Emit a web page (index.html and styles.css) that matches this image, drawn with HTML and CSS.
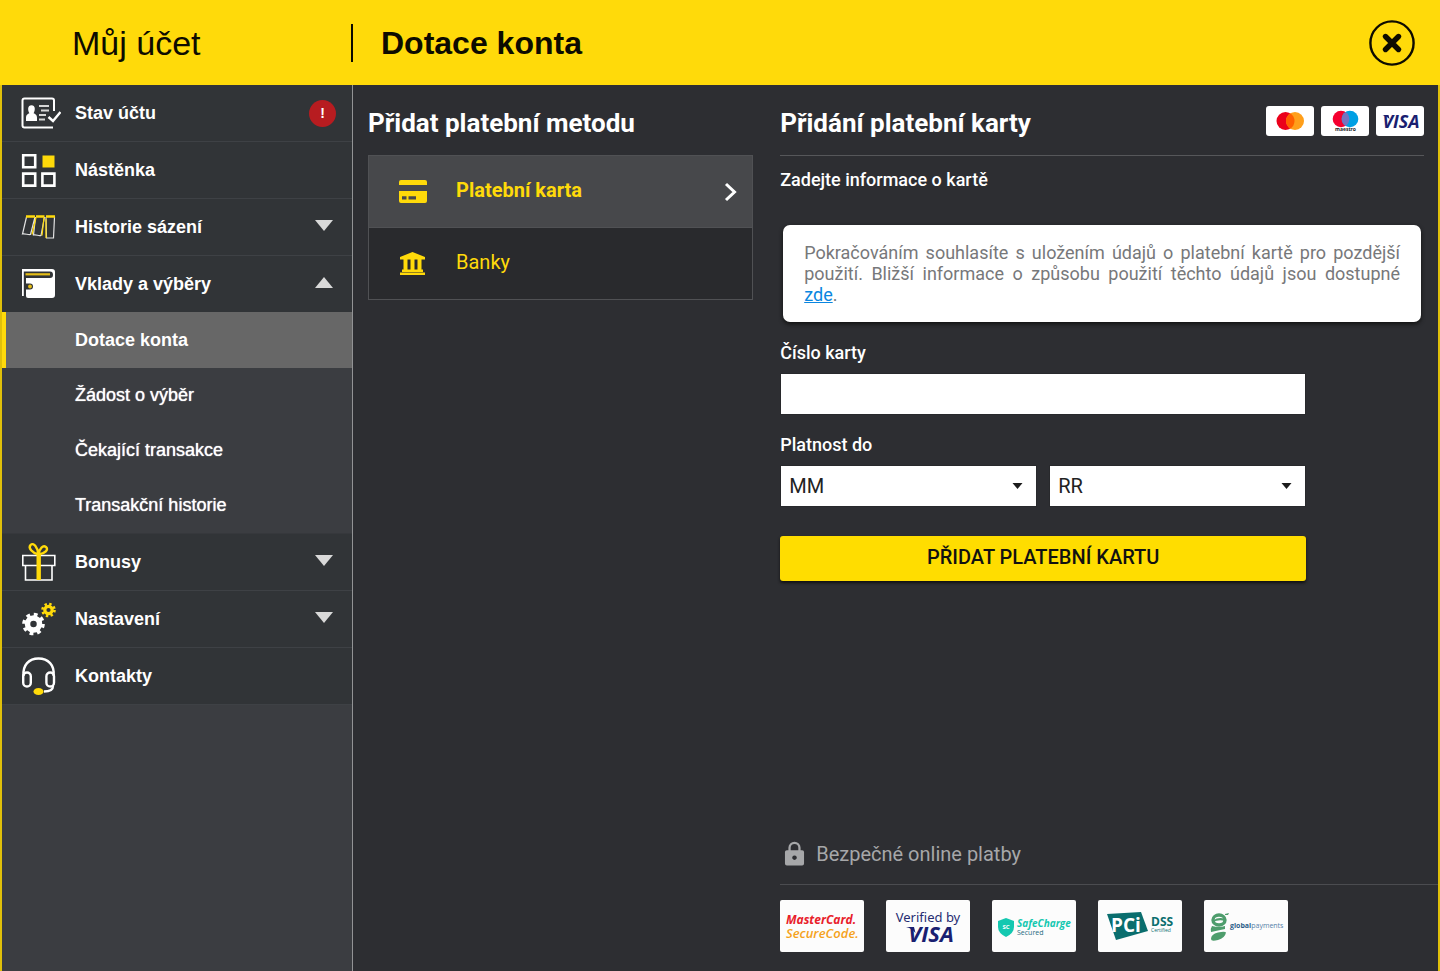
FILE: index.html
```html
<!DOCTYPE html>
<html lang="cs">
<head>
<meta charset="utf-8">
<title>Můj účet – Dotace konta</title>
<meta name="viewport" content="width=device-width, initial-scale=1">
<link rel="stylesheet" href="styles.css">
</head>
<body>
<div class="page">
  <header class="topbar">
    <div class="topbar-account">Můj účet</div>
    <h1 class="topbar-title">Dotace konta</h1>
    <button class="close" type="button" aria-label="Zavřít">
      <svg width="46" height="46" viewBox="0 0 46 46" fill="none" stroke="#0d0b00"><circle cx="23" cy="23" r="21.6" stroke-width="2.4"/><path d="M16.5 16.5l13 13M29.5 16.5l-13 13" stroke-width="5.4" stroke-linecap="round"/></svg>
    </button>
  </header>

  <div class="body">
    <nav class="sidebar" aria-label="Můj účet">
      <a class="item" href="#">
        <svg class="icon" viewBox="0 0 40 40" fill="none"><path d="M33 18V7.500a2 2 0 0 0-2-2H3.500a2 2 0 0 0-2 2v25a2 2 0 0 0 2 2H32" stroke="#fff" stroke-width="2"/><path d="M5 28v-3.500c0-2.500 1.700-3.500 3.400-4.200C6.500 17 6.500 12.500 10.500 12.300c4 .200 4 4.700 2.100 8 1.700.700 3.400 1.700 3.400 4.200V28z" fill="#fff"/><path d="M18 13h10M20 17.500h8M18 22h7M18 26.500h6" stroke="#d6d6d6" stroke-width="1.800"/><path d="M27.500 24l4.500 4 7.500-9" stroke="#fff" stroke-width="2.400"/></svg>
        <span class="item-text">Stav účtu</span><span class="alert">!</span>
      </a>
      <a class="item" href="#">
        <svg class="icon" viewBox="0 0 40 40" fill="none" stroke="#fff" stroke-width="2.600"><path d="M2.200 5.200h12v12h-12zM2.200 23.600h12v12h-12zM21.400 23.600h12v12h-12z"/><path d="M21.500 5.500h12v12h-12z" fill="#ffda0a" stroke="none"/></svg>
        <span class="item-text">Nástěnka</span>
      </a>
      <a class="item" href="#">
        <svg class="icon" viewBox="0 0 40 40" fill="none" stroke="#e2e2e2" stroke-width="1.200"><path d="M5.500 10l-4 17c3-.500 5.500 1 8 .500L14 10M14.500 10l-2 18c3-1 5 1.500 7.500.500L23.500 10M25 10l.500 21h7L33.500 10"/><path d="M11 27.500l4-17M21 28.500l2-18M25 12v19" stroke="#ffda0a"/><path d="M5 9.500h9M15 9.500h8.500M25 9.500h9" stroke="#ffda0a" stroke-width="2.400"/></svg>
        <span class="item-text">Historie sázení</span>
        <svg class="caret" viewBox="0 0 18 11"><path d="M0 0h18L9 11z" fill="#d9d9d9"/></svg>
      </a>
      <a class="item item-open" href="#">
        <svg class="icon" viewBox="0 0 40 40"><path d="M1 5h30q3 0 3 3v23q0 3-3 3H7q-2 0-2-2H1z" fill="#fff"/><path d="M2.800 7.500v25H5V14h24q3 0 3-3.200T29 7.500z" fill="#303336"/><path d="M4.500 10.300H29" stroke="#e5bd16" stroke-width="2.200"/><path d="M5 19.500h4q3 0 3 3t-3 3H5z" fill="#303336"/><circle cx="9" cy="22.500" r="1.900" fill="#e5bd16"/></svg>
        <span class="item-text">Vklady a výběry</span>
        <svg class="caret" viewBox="0 0 18 11"><path d="M0 11h18L9 0z" fill="#d9d9d9"/></svg>
      </a>
      <div class="submenu">
        <a class="sub sub-active" href="#" aria-current="page">Dotace konta</a>
        <a class="sub" href="#">Žádost o výběr</a>
        <a class="sub" href="#">Čekající transakce</a>
        <a class="sub" href="#">Transakční historie</a>
      </div>
      <a class="item" href="#">
        <svg class="icon" viewBox="0 0 40 40" fill="none"><path d="M1.800 13.500h32v10h-32zM4.500 23.500V38H31V23.500" stroke="#fff" stroke-width="1.600"/><path d="M17.700 13v25" stroke="#ffda0a" stroke-width="4.400"/><path d="M17.500 12.500C11 11 7 6 9.500 3c3-3 7 2 8 9.500 1-6.500 4.500-9.500 7.500-7.500 3 2.500-1 6.500-7.500 7.500z" stroke="#ffda0a" stroke-width="2.400"/></svg>
        <span class="item-text">Bonusy</span>
        <svg class="caret" viewBox="0 0 18 11"><path d="M0 0h18L9 11z" fill="#d9d9d9"/></svg>
      </a>
      <a class="item" href="#">
        <svg class="icon" viewBox="0 0 40 40" fill="none"><circle cx="12.500" cy="25" r="6" stroke="#fff" stroke-width="5.500"/><circle cx="12.500" cy="25" r="9.600" stroke="#fff" stroke-width="3.400" stroke-dasharray="3.770 3.770"/><circle cx="27.500" cy="11" r="3.700" stroke="#ffda0a" stroke-width="3.200"/><circle cx="27.500" cy="11" r="6" stroke="#ffda0a" stroke-width="2.600" stroke-dasharray="2.356 2.356"/></svg>
        <span class="item-text">Nastavení</span>
        <svg class="caret" viewBox="0 0 18 11"><path d="M0 0h18L9 11z" fill="#d9d9d9"/></svg>
      </a>
      <a class="item" href="#">
        <svg class="icon" viewBox="0 0 40 40" fill="none" stroke="#fff" stroke-width="2.400"><path d="M2.500 20C1.500 9 8 2.500 17.500 2.500S34 9 32.500 20M32 30c0 4-4 5.500-9 5.500"/><rect x="2.200" y="16.500" width="7.600" height="14" rx="3.800"/><rect x="25.400" y="16.500" width="7.600" height="14" rx="3.800"/><ellipse cx="17.500" cy="35.500" rx="5" ry="3.600" fill="#ffda0a" stroke="none"/></svg>
        <span class="item-text">Kontakty</span>
      </a>
    </nav>

    <main class="main">
      <section class="methods">
        <div class="head"><h2 class="title">Přidat platební metodu</h2></div>
        <div class="method-list">
          <button class="method method-active" type="button">
            <svg class="method-icon" viewBox="0 0 30 26"><path d="M3 1h24q2 0 2 2v3H1V3q0-2 2-2zM1 12h28v10q0 2-2 2H3q-2 0-2-2zM4 17.200v3.300h4.500v-3.300zm6.500 0v3.300H18v-3.300z" fill="#ffda0a" fill-rule="evenodd"/></svg>
            <span class="method-text">Platební karta</span>
            <svg class="chevron" viewBox="0 0 14 20"><path d="M2 2l8.500 8L2 18" fill="none" stroke="#fff" stroke-width="3"/></svg>
          </button>
          <button class="method" type="button">
            <svg class="method-icon" viewBox="0 0 30 26"><path d="M14.500 1L27 6v2.500H2V6zM5.500 8.500h4V19h-4zM12.500 8.500h4V19h-4zM19.500 8.500h4V19h-4zM4 18.500h21V21H4zM2 21.500h25V24H2z" fill="#ffda0a"/></svg>
            <span class="method-text">Banky</span>
          </button>
        </div>
      </section>

      <section class="card">
        <form class="card-form">
          <div class="head head-lined">
            <h2 class="title">Přidání platební karty</h2>
            <div class="brands">
              <svg class="brand" viewBox="0 0 48 30" role="img" aria-label="Mastercard"><circle cx="19.500" cy="15" r="9" fill="#eb001b"/><circle cx="29" cy="15" r="9" fill="#ff9f1a"/><path d="M24.250 7.350a9 9 0 0 1 0 15.300a9 9 0 0 1 0-15.300z" fill="#ff5f00"/></svg>
              <svg class="brand" viewBox="0 0 48 30" role="img" aria-label="Maestro"><circle cx="20" cy="13" r="8.300" fill="#f5002f"/><circle cx="29" cy="13" r="8.300" fill="#00a0e4"/><path d="M24.500 6a8.300 8.300 0 0 1 0 14a8.300 8.300 0 0 1 0-14z" fill="#7673c0"/><text x="24.500" y="25" class="maestro-text">maestro</text></svg>
              <svg class="brand" viewBox="0 0 48 30" role="img" aria-label="Visa"><text x="25" y="21.500" class="visa-text">VISA</text><path d="M6.500 9h6l1 4q-3-3-7-4z" fill="#1a1f71"/></svg>
            </div>
          </div>
          <p class="lead">Zadejte informace o kartě</p>
          <p class="notice">Pokračováním souhlasíte s uložením údajů o platební kartě pro pozdější použití. Bližší informace o způsobu použití těchto údajů jsou dostupné <a class="notice-link" href="#">zde</a>.</p>
          <div class="fields">
            <label class="label" for="number">Číslo karty</label>
            <input class="control" id="number" type="text" inputmode="numeric">
            <label class="label" for="month">Platnost do</label>
            <div class="expiry">
              <div class="select-wrap">
                <select class="control" id="month"><option>MM</option></select>
                <svg class="select-arrow" viewBox="0 0 10 6"><path d="M0 0h10L5 6z" fill="#1c1c1c"/></svg>
              </div>
              <div class="select-wrap">
                <select class="control" id="year" aria-label="Rok platnosti"><option>RR</option></select>
                <svg class="select-arrow" viewBox="0 0 10 6"><path d="M0 0h10L5 6z" fill="#1c1c1c"/></svg>
              </div>
            </div>
            <button class="submit" type="submit">PŘIDAT PLATEBNÍ KARTU</button>
          </div>
        </form>

        <footer class="secure">
          <div class="secure-head">
            <svg class="lock" viewBox="0 0 22 26"><path d="M5.800 10V6.500a5 5 0 0 1 10.400 0V10" fill="none" stroke="#a6a7a9" stroke-width="2.400"/><path d="M3 9h16q2 0 2 2v12q0 2-2 2H3q-2 0-2-2V11q0-2 2-2zm8 5.500a2.400 2.400 0 1 0 .01 0z" fill="#a6a7a9"/></svg>
            <span class="secure-text">Bezpečné online platby</span>
          </div>
          <div class="badges">
            <svg class="badge" viewBox="0 0 84 52" role="img" aria-label="MasterCard SecureCode"><text x="6" y="24" class="mc-red">MasterCard.</text><text x="6" y="38" class="mc-orange">SecureCode.</text></svg>
            <svg class="badge" viewBox="0 0 84 52" role="img" aria-label="Verified by Visa"><text x="42" y="22" class="verified-text">Verified by</text><text x="45" y="42" class="visa-large">VISA</text><path d="M20 27h8l1.500 6q-4-5-9.500-6z" fill="#1a1f71"/></svg>
            <svg class="badge" viewBox="0 0 84 52" role="img" aria-label="SafeCharge Secured"><path d="M14 18l8 3v6q0 6-8 10q-8-4-8-10v-6z" fill="#14c8b0"/><text x="14" y="29" class="sc-mark">SC</text><text x="25" y="27" class="sc-name">SafeCharge</text><text x="25" y="35" class="sc-sub">Secured</text></svg>
            <svg class="badge" viewBox="0 0 84 52" role="img" aria-label="PCI DSS Certified"><path d="M9 14l34-2 7 19-32 9z" fill="#0a6e6e"/><text x="13" y="32" class="pci-text">PCi</text><text x="53" y="26" class="dss-text">DSS</text><text x="53" y="32" class="dss-sub">Certified</text></svg>
            <svg class="badge" viewBox="0 0 84 52" role="img" aria-label="Global Payments"><ellipse cx="15" cy="20" rx="6" ry="5" fill="none" stroke="#4e9d6c" stroke-width="3.400"/><path d="M9 20.500q6-4 12-1.500v2q-6-2-12 1zM8 26q7 2 13 0v3l-14 3q-1-3 1-6zM7 39q0-5 7-6.500t8 0q-1 5.500-8 7.500t-7-1zM21 14l4-1-1 2h-3z" fill="#4e9d6c"/><text x="26" y="28" class="gp-text"><tspan class="gp-bold">global</tspan>payments</text></svg>
          </div>
        </footer>
      </section>
    </main>
  </div>
</div>
</body>
</html>
```

FILE: styles.css
```css
* { box-sizing: border-box; }

body {
  margin: 0;
  background: #2d2e32;
  color: #fff;
  font-family: Roboto, "Liberation Sans", sans-serif;
}

button { font: inherit; cursor: pointer; }

.page {
  display: flex;
  flex-direction: column;
  min-height: 100vh;
}

/* Top bar */
.topbar {
  display: flex;
  align-items: center;
  height: 85px;
  padding-right: 25px;
  background: #ffda0a;
  color: #0d0b00;
  font-family: "Liberation Sans", Arial, sans-serif;
}

.topbar-account {
  flex: 0 0 353px;
  padding-left: 72px;
  border-right: 2px solid #0d0b00;
  font-size: 34px;
  line-height: 38px;
}

.topbar-title {
  flex: 1;
  margin: 0;
  padding-left: 28px;
  font-size: 32px;
  line-height: 38px;
}

.close {
  display: flex;
  padding: 0;
  border: 0;
  background: none;
}

.body {
  display: flex;
  flex: 1;
  border: solid #e0c00a;
  border-width: 0 2px;
}

/* Sidebar */
.sidebar {
  flex: 0 0 351px;
  border-right: 1px solid #929395;
  background: #3b3d41;
  font-family: "Liberation Sans", Arial, sans-serif;
  font-size: 18px;
}

.item {
  display: flex;
  align-items: center;
  height: 57px;
  padding: 0 19px;
  border-bottom: 1px solid #3e4145;
  background: #313437;
  color: #fff;
  font-weight: bold;
  text-decoration: none;
}

.item-open { height: 56px; border-bottom: 0; }

.icon { width: 40px; height: 40px; }

.item-text { flex: 1; padding-left: 14px; }

.caret { width: 18px; height: 11px; margin-bottom: 4px; }

.alert {
  width: 27px;
  margin-right: -3px;
  border-radius: 50%;
  background: #b71c20;
  font-size: 14px;
  line-height: 27px;
  text-align: center;
}

.submenu { border-bottom: 1px solid #36383c; }

.sub {
  display: block;
  padding-left: 73px;
  color: #fff;
  line-height: 55px;
  text-decoration: none;
  text-shadow: 0 0 1px #fff;
}

.sub-active {
  padding-left: 69px;
  border-left: 4px solid #ffda0a;
  background: #676767;
  line-height: 56px;
  font-weight: bold;
  text-shadow: none;
}

/* Main area */
.main {
  display: grid;
  flex: 1;
  grid-template-columns: 36% 1fr;
  column-gap: 27px;
  padding-left: 15px;
}

.head {
  display: flex;
  align-items: center;
  justify-content: space-between;
  height: 70px;
  padding-top: 2px;
}

.title {
  margin: 0;
  padding-top: 4px;
  font-size: 26px;
  line-height: 32px;
}

.method-list { border: 1px solid #505154; }

.method {
  display: flex;
  align-items: center;
  width: 100%;
  height: 71px;
  padding: 0 14px 0 29px;
  border: 0;
  background: #292a2d;
  color: #ffda0a;
  font-size: 20px;
  text-align: left;
}

.method-active {
  height: 72px;
  border-bottom: 1px solid #505154;
  background: #47484b;
  font-weight: bold;
}

.method-icon { width: 30px; height: 26px; }

.method-text { flex: 1; padding: 0 0 4px 28px; }

.chevron { width: 14px; height: 20px; }

/* Card form */
.card {
  display: flex;
  flex-direction: column;
  justify-content: space-between;
}

.card-form { padding-right: 14px; }

.head-lined {
  height: 71px;
  border-bottom: 1px solid #56575a;
}

.brands { display: flex; gap: 7px; }

.brand {
  width: 48px;
  height: 30px;
  border-radius: 3px;
  background: #fff;
}

.lead {
  margin: 0;
  padding: 11px 0 33px;
  font-size: 18px;
  font-weight: 500;
  line-height: 25px;
}

.notice {
  margin: 0 3px;
  padding: 17px 21px;
  border-radius: 7px;
  background: #fff;
  box-shadow: 0 2px 4px #111;
  color: #77787a;
  font-size: 18px;
  line-height: 21px;
  text-align: justify;
}

.notice-link { color: #0a86e0; }

.fields {
  display: flex;
  flex-direction: column;
  max-width: 526px;
  padding-top: 19px;
}

.label {
  padding-bottom: 8px;
  font-size: 18px;
  font-weight: 500;
  line-height: 24px;
}

.control {
  width: 100%;
  height: 42px;
  padding: 0 8px;
  border: 1px solid #28292c;
  border-radius: 0;
  appearance: none;
  background: #fff;
  color: #222;
  font: 20px Roboto, sans-serif;
}

.control + .label { padding-top: 18px; }

.expiry { display: flex; gap: 12px; }

.select-wrap { position: relative; flex: 1; }

.select-arrow {
  position: absolute;
  top: 18px;
  right: 14px;
  width: 11px;
  height: 6px;
  pointer-events: none;
}

.submit {
  height: 45px;
  margin-top: 29px;
  padding: 0 0 3px;
  border: 0;
  border-radius: 3px;
  background: #ffdd00;
  box-shadow: 0 2px 3px #111;
  color: #111;
  font-size: 20px;
  font-weight: 500;
}

/* Secure payments */
.secure { padding: 20px 0 19px; }

.secure-head {
  display: flex;
  align-items: center;
  gap: 11px;
  padding: 0 4px 17px;
  border-bottom: 1px solid #4b4c50;
  color: #a6a7a9;
  font-size: 20px;
}

.lock { width: 21px; height: 26px; }

.badges {
  display: flex;
  flex-wrap: wrap;
  gap: 22px;
  padding-top: 15px;
}

.badge {
  width: 84px;
  height: 52px;
  border-radius: 2px;
  background: #fcfcfc;
}

.visa-text, .visa-large {
  fill: #1a1f71;
  font: italic bold 18px "Open Sans", sans-serif;
  text-anchor: middle;
}

.visa-large { font-size: 22px; }

.maestro-text {
  fill: #222;
  font: bold 5px "Open Sans", sans-serif;
  text-anchor: middle;
}

.mc-red { fill: #e8202a; font: italic bold 12px "Open Sans", sans-serif; }
.mc-orange { fill: #f5a21b; font: italic 600 13px "Open Sans", sans-serif; }

.verified-text {
  fill: #262c72;
  font: 13px "Noto Sans", sans-serif;
  text-anchor: middle;
}

.sc-mark {
  fill: #fff;
  font: bold 6px "Open Sans", sans-serif;
  text-anchor: middle;
}

.sc-name { fill: #14c8b0; font: italic bold 10px "Open Sans", sans-serif; }
.sc-sub { fill: #1c6b80; font: 7px "Open Sans", sans-serif; }

.pci-text { fill: #fff; font: bold 19px "Open Sans", sans-serif; }
.dss-text { fill: #0a6e6e; font: bold 12px "Open Sans", sans-serif; }
.dss-sub { fill: #0a6e6e; font: 5px "Open Sans", sans-serif; }

.gp-text { fill: #5580a8; font: 7px "Open Sans", sans-serif; }
.gp-bold { font-weight: bold; fill: #2b5c88; }
```
